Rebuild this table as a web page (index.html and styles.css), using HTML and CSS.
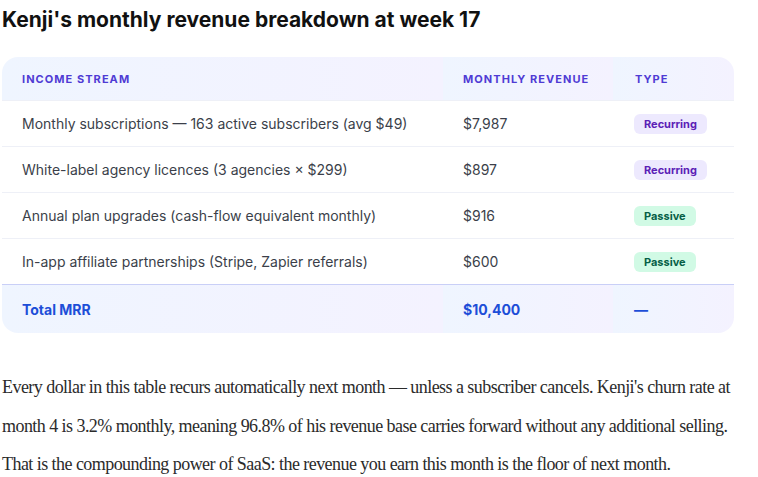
FILE: index.html
```html
<!DOCTYPE html>
<html lang="en">
<head>
<meta charset="utf-8">
<title>Kenji's monthly revenue breakdown</title>
<link rel="stylesheet" href="styles.css">
</head>
<body>
<h1 class="title">Kenji's monthly revenue breakdown at week 17</h1>
<table class="rev">
  <thead>
    <tr>
      <th class="c1">Income Stream</th>
      <th class="c2">Monthly Revenue</th>
      <th class="c3">Type</th>
    </tr>
  </thead>
  <tbody>
    <tr>
      <td>Monthly subscriptions — 163 active subscribers (avg $49)</td>
      <td>$7,987</td>
      <td><span class="badge rec">Recurring</span></td>
    </tr>
    <tr>
      <td>White-label agency licences (3 agencies × $299)</td>
      <td>$897</td>
      <td><span class="badge rec">Recurring</span></td>
    </tr>
    <tr>
      <td>Annual plan upgrades (cash-flow equivalent monthly)</td>
      <td>$916</td>
      <td><span class="badge pas">Passive</span></td>
    </tr>
    <tr>
      <td>In-app affiliate partnerships (Stripe, Zapier referrals)</td>
      <td>$600</td>
      <td><span class="badge pas">Passive</span></td>
    </tr>
    <tr class="total">
      <td>Total MRR</td>
      <td>$10,400</td>
      <td>—</td>
    </tr>
  </tbody>
</table>
<p class="body">Every dollar in this table recurs automatically next month — unless a subscriber cancels. Kenji's churn rate at month 4 is 3.2% monthly, meaning 96.8% of his revenue base carries forward without any additional selling. That is the compounding power of SaaS: the revenue you earn this month is the floor of next month.</p>
</body>
</html>
```
FILE: styles.css
```css
html, body {
  margin: 0;
  padding: 0;
  background: #ffffff;
}
body {
  padding: 0 2px;
  font-family: Inter, "Liberation Sans", sans-serif;
}
.title {
  margin: 7px 0 25px;
  font-size: 21px;
  line-height: 25px;
  font-weight: 700;
  color: #111111;
}
.rev {
  width: 730px;
  border-collapse: separate;
  border-spacing: 0;
  border-radius: 16px;
  overflow: hidden;
  table-layout: fixed;
}
.rev th {
  height: 43px;
  padding: 0 0 0 20px;
  text-align: left;
  font-size: 11px;
  font-weight: 700;
  letter-spacing: 1.05px;
  text-transform: uppercase;
  color: #4f3bd4;
  background: linear-gradient(90deg, #eff5ff, #f4f2ff);
  border-bottom: 1px solid #eef0f7;
}
.rev th.c1 { width: 421px; }
.rev th.c2 { width: 150px; }
.rev th.c3 { width: 99px; padding-left: 22px; }
.rev td {
  height: 45px;
  padding: 0 0 0 20px;
  font-size: 14px;
  color: #3b3f4a;
  border-bottom: 1px solid #eef0f7;
}
.rev td:nth-child(3) { padding-left: 21px; }
.rev tr:nth-child(4) td { border-bottom: 0; }
.rev .total td {
  height: 48px;
  border-top: 1px solid #c9cff7;
  border-bottom: 0;
  font-weight: 700;
  color: #1d4ed8;
  background: linear-gradient(90deg, #eff5ff, #f4f2ff);
}
.badge {
  display: inline-block;
  height: 20px;
  line-height: 20px;
  padding: 0 10px;
  border-radius: 6px;
  font-size: 11px;
  font-weight: 700;
}
.badge.rec { background: #ede9fe; color: #5b21b6; }
.badge.pas { background: #d1fae5; color: #065f46; }
.body {
  margin: 35px 0 0;
  font-family: "Liberation Serif", "Times New Roman", serif;
  font-size: 18px;
  line-height: 38.5px;
  color: #2b2b2b;
  letter-spacing: -0.55px;
}
```
